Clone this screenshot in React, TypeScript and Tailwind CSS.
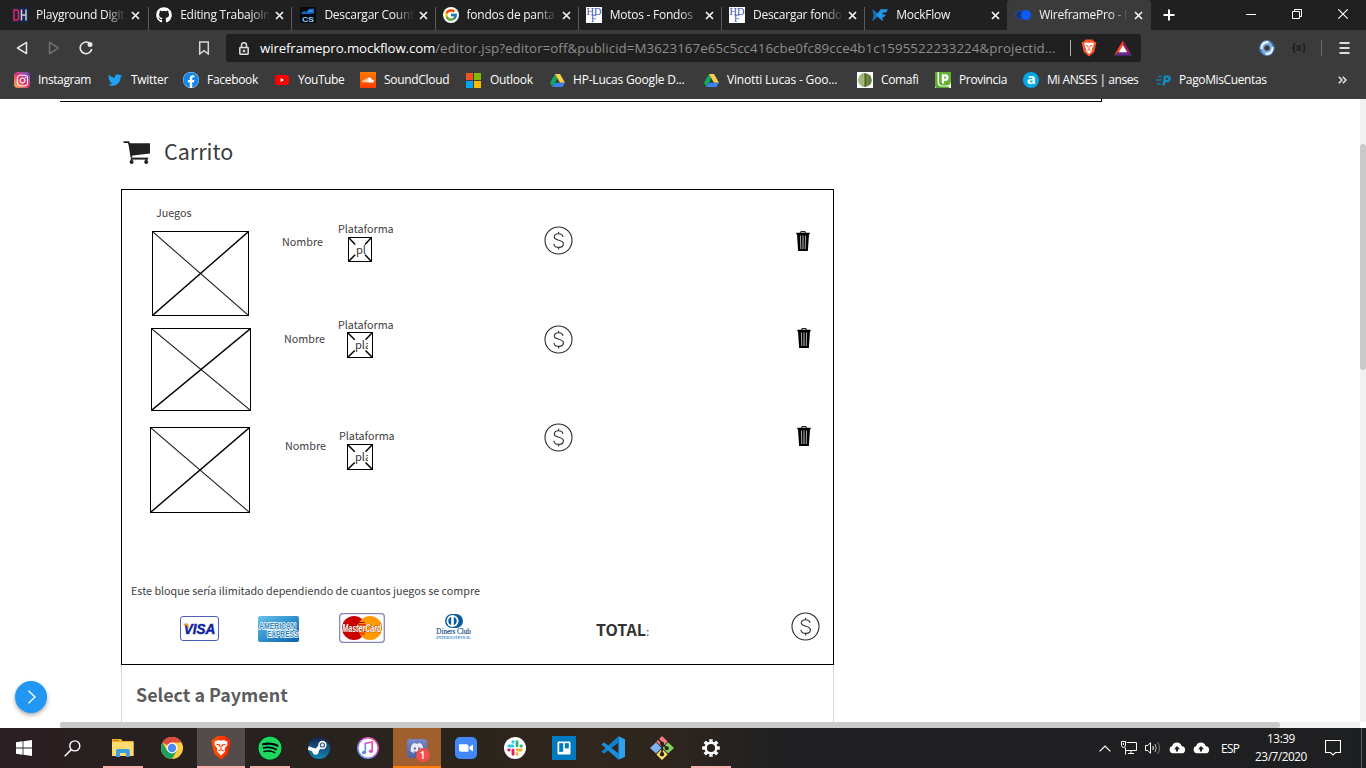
import React from "react";
import { FaGithub, FaTwitter, FaFacebook, FaSoundcloud, FaSpotify, FaInstagram, FaDiscord } from "react-icons/fa";
import { FcGoogle } from "react-icons/fc";

const UI = "font-['Open_Sans','Noto_Sans',sans-serif]";
const PAGE = "font-['Noto_Sans_CJK_SC','Noto_Sans',sans-serif]";

/* ---------- favicons ---------- */

const PlaygroundIcon = () => (
  <svg width="16" height="16" viewBox="0 0 16 16">
    <rect y="0.5" width="16" height="15" fill="#1b2450" />
    <path d="M2 3 V13 H4.5 Q6.5 13 6.5 11 V5 Q6.5 3 4.5 3 Z" fill="none" stroke="#f0243f" strokeWidth="1.5" />
    <path d="M9.5 2.5 V13.5 M14 2.5 V13.5 M9.5 8 H14" stroke="#c9cde0" strokeWidth="1.5" />
  </svg>
);
const CsIcon = () => (
  <svg width="16" height="16" viewBox="0 0 16 16">
    <rect width="16" height="16" rx="1" fill="#05080e" />
    <path d="M1 6 L4 4 L6 5 L9 2 L14 1.5 V6.5 L9 7 H2 Z" fill="#1268c8" />
    <path d="M8 4 H13" stroke="#56aef5" />
    <text x="2" y="15" fontFamily="Liberation Sans" fontSize="8" fontWeight="bold" textLength="12" lengthAdjust="spacingAndGlyphs" fill="#8fd0fa">
      CS
    </text>
  </svg>
);
const GoogleIcon = () => (
  <span className="flex h-4 w-4 items-center justify-center rounded-full bg-white">
    <FcGoogle size={14} />
  </span>
);
const HdfIcon = () => (
  <svg width="16" height="16" viewBox="0 0 16 16">
    <rect width="16" height="16" fill="#fff" />
    <g fontFamily="Liberation Serif" fill="#4253b4">
      <text x="0.5" y="7.5" fontSize="10" textLength="15" lengthAdjust="spacingAndGlyphs">
        HD
      </text>
      <text x="5" y="15" fontSize="10">
        F
      </text>
    </g>
  </svg>
);
const MockflowIcon = () => (
  <svg width="16" height="14" viewBox="0 0 16 14">
    <path d="M0.2 1 L6 5.4 V8.6 L0.2 13.2 L1.6 7.2 Z" fill="#1670b8" />
    <path d="M4.5 7 L8.6 1.2 H16 L14.2 4.4 H10.6 V6.4 H13.8 L12.4 9 H10.6 V13.2 L6 9 Z" fill="#2196ea" />
  </svg>
);
const WireIcon = () => (
  <svg width="16" height="12" viewBox="0 0 16 12">
    <circle cx="5" cy="6" r="4.3" fill="#1f3468" stroke="#1c50c8" />
    <circle cx="11" cy="6" r="5" fill="#0b5cff" />
  </svg>
);

const tabs: { title: string; icon: React.ReactNode; cell: string; divider?: boolean }[] = [
  { title: "Playground Digit", icon: <PlaygroundIcon />, cell: "w-[144.2px] pl-[7px]", divider: true },
  { title: "Editing TrabajoIn", icon: <FaGithub size={16} className="text-white" />, cell: "w-[143.2px] pl-[7px]", divider: true },
  { title: "Descargar Count", icon: <CsIcon />, cell: "w-[143.2px] pl-[8px]", divider: true },
  { title: "fondos de panta", icon: <GoogleIcon />, cell: "w-[143.2px] pl-[7px]", divider: true },
  { title: "Motos - Fondos", icon: <HdfIcon />, cell: "w-[143.2px] pl-[7px]", divider: true },
  { title: "Descargar fondo", icon: <HdfIcon />, cell: "w-[143.2px] pl-[7px]", divider: true },
  { title: "MockFlow", icon: <MockflowIcon />, cell: "w-[142px] pl-[7px]" },
  { title: "WireframePro - I", icon: <WireIcon />, cell: "w-[144px] rounded-t-[3px] bg-[#3b3b3b] pl-2" },
];

const Close = () => (
  <svg width="9" height="9" viewBox="0 0 9 9" className="shrink-0">
    <path d="M1 1 L8 8 M8 1 L1 8" stroke="#f2f2f2" strokeWidth="1.7" />
  </svg>
);

function TabStrip() {
  return (
    <div className="flex h-[30px] bg-[#202020] pl-[5px]">
      {tabs.map((t, i) => (
        <div key={i} className={`${t.cell} flex h-[30px] shrink-0 items-center text-[#f4f4f4]`}>
          <span className="flex w-4 shrink-0 justify-center">{t.icon}</span>
          <span className="ml-2 w-[92px] shrink-0 whitespace-nowrap text-[12px] leading-4 tracking-[-0.25px] [mask-image:linear-gradient(90deg,#000_76%,transparent_98%)]">
            {t.title}
          </span>
          <span className="ml-[3px]">
            <Close />
          </span>
          {t.divider && <span className="ml-auto mt-[7px] h-[23px] w-px shrink-0 bg-[#5c5c5c]" />}
        </div>
      ))}
      <div className="flex flex-1 items-center">
        <svg width="12" height="12" viewBox="0 0 12 12" className="ml-[12px]">
          <path d="M6 0.5 V11.5 M0.5 6 H11.5" stroke="#fff" strokeWidth="2" />
        </svg>
        <svg width="10" height="10" viewBox="0 0 10 10" className="ml-[71px]">
          <path d="M0 4.5 H10" stroke="#fff" />
        </svg>
        <svg width="10" height="10" viewBox="0 0 10 10" className="mb-[2px] ml-[36px]">
          <path d="M2.5 2.5 V0.5 H9.5 V7.5 H7.5 M0.5 2.5 H7.5 V9.5 H0.5 Z" fill="none" stroke="#fff" />
        </svg>
        <svg width="10" height="10" viewBox="0 0 10 10" className="mb-[2px] ml-[36px]">
          <path d="M0.3 0.3 L9.7 9.7 M9.7 0.3 L0.3 9.7" stroke="#fff" strokeWidth="1.1" />
        </svg>
      </div>
    </div>
  );
}

function Toolbar() {
  return (
    <div className="flex h-9 items-center">
      <svg width="12" height="14" viewBox="0 0 12 14" className="ml-4">
        <path d="M10.5 1.4 V12.6 L1.5 7 Z" fill="none" stroke="#e4e4e4" strokeWidth="1.5" strokeLinejoin="round" />
      </svg>
      <svg width="12" height="14" viewBox="0 0 12 14" className="ml-5">
        <path d="M1.5 1.4 V12.6 L10.5 7 Z" fill="none" stroke="#757575" strokeWidth="1.4" strokeLinejoin="round" />
      </svg>
      <svg width="14" height="14" viewBox="0 0 14 14" className="ml-[19px]">
        <path d="M10.5 2.2 A5.8 5.8 0 1 0 12.7 8" fill="none" stroke="#e8e8e8" strokeWidth="1.6" />
        <circle cx="11" cy="3.5" r="2.5" fill="#e8e8e8" />
      </svg>
      <svg width="12" height="14" viewBox="0 0 12 14" className="ml-[105px]">
        <path d="M1.7 1 H10.3 V13 L6 9.7 L1.7 13 Z" fill="none" stroke="#d8d8d8" strokeWidth="1.5" />
      </svg>
      <div className="ml-4 flex h-7 w-[915px] items-center rounded-[3px] bg-[#202020]">
        <svg width="10" height="13" viewBox="0 0 10 13" className="ml-[13px]">
          <path d="M2.5 5.5 V3.3 A2.5 2.5 0 0 1 7.5 3.3 V5.5" fill="none" stroke="#dedede" strokeWidth="1.5" />
          <rect x="0.8" y="5.6" width="8.4" height="6.6" rx="0.6" fill="#333" stroke="#dedede" strokeWidth="1.5" />
          <circle cx="5" cy="8.9" r="1.2" fill="#dedede" />
        </svg>
        <div className="ml-[11px] w-[797px] whitespace-nowrap text-[13.3px] leading-5 tracking-[-0.14px] text-[#8d8d8d]">
          <span className="text-white">wireframepro.mockflow.com</span>
          <span className="tracking-[0.07px]">/editor.jsp?editor=off&amp;publicid=M3623167e65c5cc416cbe0fc89cce4b1c1595522233224&amp;projectid...</span>
        </div>
        <span className="ml-[13px] h-4 w-px bg-[#b0b0b0]" />
        <svg width="16" height="18" viewBox="0 0 16 18" className="ml-[10px]">
          <path d="M4.5 0.5 H11.5 L13 2.2 L15.5 3.5 L14.8 6 L13.3 13 L8 17.5 L2.7 13 L1.2 6 L0.5 3.5 L3 2.2 Z" fill="#fb542b" />
          <path d="M3 4 L6 3.5 L8 4 L10 3.5 L13 4 L12 7.5 L10.8 10 L11 12 L8 15 L5 12 L5.2 10 L4 7.5 Z" fill="#fff" />
          <path d="M4.8 6.5 L7 7 L6.8 8 M11.2 6.5 L9 7 L9.2 8 M6.2 11.5 L8 10.5 L9.8 11.5 M8 8 V10" stroke="#fb542b" fill="none" strokeWidth="1" />
        </svg>
        <svg width="18" height="16" viewBox="0 0 18 16" className="ml-[17px]">
          <path d="M9 0.5 L0 15.5 L9 9 Z" fill="#ff4724" />
          <path d="M9 0.5 L18 15.5 L9 9 Z" fill="#9e1f63" />
          <path d="M0 15.5 H18 L9 9 Z" fill="#662d91" />
          <path d="M9 5.2 L4.8 12.2 H13.2 Z" fill="#fff" />
        </svg>
      </div>
      <svg width="16" height="16" viewBox="0 0 16 16" className="ml-[118px]">
        <circle cx="8" cy="8" r="5.2" fill="none" stroke="#7faade" strokeWidth="5" />
        <path d="M8 0.4 A7.6 7.6 0 0 1 15.6 8 A7.6 7.6 0 0 1 12 14.4 A8.5 8.5 0 0 0 8 0.4 Z" fill="#1f58a6" />
        <path d="M8 15.6 A7.6 7.6 0 0 1 0.4 8 A7.6 7.6 0 0 1 4 1.6 A8.5 8.5 0 0 0 8 15.6 Z" fill="#2f6bb8" />
        <path d="M2.6 9 A5.6 5.6 0 0 1 9.4 2.4 M13.4 7 A5.6 5.6 0 0 1 6.6 13.6" fill="none" stroke="#f2f8ff" strokeWidth="2" />
      </svg>
      <svg width="14" height="10" viewBox="0 0 14 10" className="ml-[17px]">
        <path d="M3 0.8 H2 V4 L0.8 5 L2 6 V9.2 H3 M11 0.8 H12 V4 L13.2 5 L12 6 V9.2 H11 M4.5 3 H9.5 M4.5 5 H9.5 M4.5 7 H9.5" fill="none" stroke="#161616" strokeWidth="1.2" />
      </svg>
      <span className="ml-[15px] h-4 w-px bg-[#6a6a6a]" />
      <svg width="11" height="12" viewBox="0 0 11 12" className="ml-[17px]">
        <path d="M0.5 1 H10.5 M0.5 6 H10.5 M0.5 11 H10.5" stroke="#dedede" strokeWidth="1.8" />
      </svg>
    </div>
  );
}

const Drive = () => (
  <svg width="15" height="13" viewBox="0 0 15 13">
    <path d="M5 0 L0 8.7 L2.5 13 L7.5 4.3 Z" fill="#11a861" />
    <path d="M5 0 H10 L15 8.7 H10 Z" fill="#ffcf48" />
    <path d="M5 8.7 H15 L12.5 13 H2.5 Z" fill="#3c7ff0" />
  </svg>
);

const bookmarks: { label: string; width: string; icon: React.ReactNode }[] = [
  {
    label: "Instagram",
    width: "w-[93px] tracking-[-0.4px]",
    icon: (
      <span className="flex h-4 w-4 items-center justify-center rounded-[4px] bg-gradient-to-tr from-[#fdb040] via-[#e0306c] to-[#6a45d8]">
        <FaInstagram size={13} className="text-white" />
      </span>
    ),
  },
  { label: "Twitter", width: "w-[76px] tracking-[-0.3px]", icon: <FaTwitter size={14} className="text-[#1da1f2]" /> },
  {
    label: "Facebook",
    width: "w-[91px] tracking-[-0.3px]",
    icon: (
      <span className="flex h-4 w-4 rounded-full bg-white">
        <FaFacebook size={16} className="text-[#1187ee]" />
      </span>
    ),
  },
  {
    label: "YouTube",
    width: "w-[86px] tracking-[-0.45px]",
    icon: (
      <svg width="14" height="10" viewBox="0 0 14 10">
        <rect width="14" height="10" rx="2.2" fill="#f00" />
        <path d="M5.6 3 L9.2 5 L5.6 7 Z" fill="#fff" />
      </svg>
    ),
  },
  {
    label: "SoundCloud",
    width: "w-[106px] tracking-[-0.3px]",
    icon: (
      <span className="flex h-4 w-4 items-center justify-center bg-gradient-to-b from-[#ff7a00] to-[#ff3a00]">
        <FaSoundcloud size={12} className="text-white" />
      </span>
    ),
  },
  {
    label: "Outlook",
    width: "w-[83px] tracking-[-0.3px]",
    icon: (
      <span className="mr-px grid h-[15px] w-[15px] grid-cols-2 gap-px">
        <span className="bg-[#f25022]" />
        <span className="bg-[#7fba00]" />
        <span className="bg-[#00a4ef]" />
        <span className="bg-[#ffb900]" />
      </span>
    ),
  },
  { label: "HP-Lucas Google D...", width: "w-[154px] tracking-[-0.2px]", icon: <Drive /> },
  { label: "Vinotti Lucas - Goo...", width: "w-[154px] tracking-[-0.17px]", icon: <Drive /> },
  {
    label: "Comafi",
    width: "w-[78px] tracking-[-0.35px]",
    icon: (
      <svg width="16" height="16" viewBox="0 0 16 16">
        <rect width="16" height="16" fill="#fff" />
        <circle cx="8" cy="8" r="6.8" fill="#5f7a34" />
        <path d="M8 1.2 A6.8 6.8 0 0 0 8 14.8 Z" fill="#a9bd83" />
        <path d="M5.6 2 Q4.2 8 5.6 14 M10.4 2 Q11.8 8 10.4 14" stroke="#86a058" strokeWidth="0.7" fill="none" />
        <path d="M8 1.2 V14.8" stroke="#3f551b" strokeWidth="1" />
      </svg>
    ),
  },
  {
    label: "Provincia",
    width: "w-[88px] tracking-[-0.35px]",
    icon: (
      <svg width="16" height="16" viewBox="0 0 16 16">
        <rect width="16" height="16" fill="#fff" />
        <path d="M0 0 H2.5 V10 Q2.5 14.5 7 14.5 H14 V16 H2 Q0 16 0 14 Z" fill="#5aa832" />
        <path d="M4 0 H16 V9 Q16 13.5 11 13.5 H7 Q4 13.5 4 10 Z" fill="#63b331" />
        <path d="M8 11.5 V3.4 H10 Q12.5 3.4 12.5 5.6 Q12.5 7.8 10 7.8 H8" fill="none" stroke="#fff" strokeWidth="2.3" />
      </svg>
    ),
  },
  {
    label: "Mi ANSES | anses",
    width: "w-[132px] tracking-[-0.45px]",
    icon: (
      <span className="flex h-4 w-4 items-center justify-center rounded-full bg-[#00a9e6] pb-[3px] font-['Open_Sans',sans-serif] text-[15px] font-bold leading-none text-white">
        a
      </span>
    ),
  },
  {
    label: "PagoMisCuentas",
    width: "w-[120px] tracking-[-0.37px]",
    icon: (
      <svg width="15" height="11" viewBox="0 0 15 11">
        <path d="M2 1.5 H6 M0 5 H5.5 M1 9 H5" stroke="#0b7fae" strokeWidth="1.4" />
        <path d="M7.5 10.5 L9 1.6 H12 Q14 1.6 13.5 4 Q13 6.2 11 6.2 H8.5" fill="none" stroke="#0d8fc6" strokeWidth="2.3" />
      </svg>
    ),
  },
];

function Bookmarks() {
  return (
    <div className="flex h-[33px] items-center pb-[5px] pl-[14px]">
      {bookmarks.map((b) => (
        <div key={b.label} className={`${b.width} flex shrink-0 items-center text-[12px] text-white`}>
          <span className="flex w-4 shrink-0 justify-center">{b.icon}</span>
          <span className="ml-2 whitespace-nowrap leading-4">{b.label}</span>
        </div>
      ))}
      <svg width="9" height="8" viewBox="0 0 9 8" className="ml-[63px]">
        <path d="M0.8 0.8 L4 4 L0.8 7.2 M4.8 0.8 L8 4 L4.8 7.2" fill="none" stroke="#e6e6e6" strokeWidth="1.5" />
      </svg>
    </div>
  );
}

/* ---------- wireframe page ---------- */

const CrossBox = ({ className }: { className: string }) => (
  <div className={`${className} border border-black`}>
    <svg width="100%" height="100%" viewBox="0 0 100 100" preserveAspectRatio="none" className="block">
      <path d="M0 0 L100 100" stroke="#222" strokeWidth="1.1" vectorEffect="non-scaling-stroke" />
      <path d="M100 0 L0 100" stroke="#000" strokeWidth="1.4" vectorEffect="non-scaling-stroke" />
    </svg>
  </div>
);

const PlatformBox = ({ className, label, size }: { className: string; label: string; size: string }) => (
  <div className={`${className} relative border border-black`}>
    <svg width="100%" height="100%" viewBox="0 0 100 100" preserveAspectRatio="none" className="block">
      <path d="M0 0 L28 28 M73 73 L100 100 M100 0 L73 28 M28 73 L0 100" stroke="#000" strokeWidth="1.5" vectorEffect="non-scaling-stroke" />
    </svg>
    <span className={`${size} absolute left-[7px] top-[3px] overflow-hidden text-[11px] leading-4 text-[#333]`}>{label}</span>
  </div>
);

const Dollar = ({ className }: { className: string }) => (
  <svg width="29" height="29" viewBox="0 0 29 29" className={`${className} shrink-0`}>
    <circle cx="14.5" cy="14.5" r="13.5" fill="none" stroke="#2b2b2b" strokeWidth="1.1" />
    <path
      d="M19 10.8 C18.7 8.8 17 7.7 14.6 7.7 C12.1 7.7 10.3 9 10.3 11 C10.3 15.2 19.4 13.2 19.4 17.8 C19.4 20 17.4 21.4 14.8 21.4 C12 21.4 10.1 20 9.9 17.7 M14.6 5.7 V7.7 M14.6 21.4 V23.4"
      fill="none"
      stroke="#333"
      strokeWidth="1.15"
    />
  </svg>
);

const Trash = ({ className }: { className: string }) => (
  <svg width="14" height="20" viewBox="0 0 14 20" className={className}>
    <path d="M4.8 2 V0.6 H9.2 V2" fill="none" stroke="#111" strokeWidth="1" />
    <path d="M0.3 1.8 H13.7 V3.2 H0.3 Z M1 3 H13 L11.9 20 H2.1 Z" fill="#000" />
    <path d="M4.4 4.5 L4.8 18 M9.6 4.5 L9.2 18" stroke="#d5d5d5" strokeWidth="0.8" />
    <path d="M7 4.5 V18" stroke="#8a8a8a" strokeWidth="1.4" />
  </svg>
);

const rows = [
  {
    row: "h-24",
    image: "ml-[30px] mt-[10px] h-[85px] w-[97px]",
    name: "ml-[2px] mt-[13px]",
    platform: "ml-[2px]",
    box: "ml-[10px] h-[25px] w-[24px]",
    label: "pl",
    labelSize: "w-[11px]",
    price: "ml-[2px] mt-[5px]",
    trash: "ml-[2px] mt-[10px]",
  },
  {
    row: "h-[102px]",
    image: "ml-[29px] mt-[11px] h-[83px] w-[100px]",
    name: "ml-[4px] mt-[14px]",
    platform: "ml-[2px]",
    box: "ml-[9px] -mt-px h-[26px] w-[26px]",
    label: "pla",
    labelSize: "w-[13px]",
    price: "ml-[2px] mt-[8px]",
    trash: "ml-[3px] mt-[11px]",
  },
  {
    row: "h-[164px]",
    image: "ml-[28px] mt-[8px] h-[86px] w-[100px]",
    name: "ml-[5px] mt-[19px]",
    platform: "ml-[3px] mt-[9px]",
    box: "ml-[8px] h-[26px] w-[26px]",
    label: "pla",
    labelSize: "w-[13px]",
    price: "ml-[2px] mt-[4px]",
    trash: "ml-[2.5px] mt-[7px]",
  },
];

const Visa = () => (
  <div className="ml-[58px] mt-[17px] flex h-[25px] w-[39px] items-center justify-center rounded-[3px] border border-[#4a5fc0] bg-white">
    <svg width="33" height="12" viewBox="0 0 33 12" className="overflow-visible">
      <text x="0.8" y="11.4" fontFamily="Liberation Sans" fontWeight="bold" fontStyle="italic" fontSize="15.5" textLength="31.5" lengthAdjust="spacingAndGlyphs" fill="#10249a" stroke="#10249a" strokeWidth="0.5">
        VISA
      </text>
      <path d="M0.2 0.8 H5 L6.6 6 Q4.4 2.2 0.2 1.4 Z" fill="#f29a1c" />
    </svg>
  </div>
);

const Amex = () => (
  <svg width="41" height="26" viewBox="0 0 41 26" className="ml-[39px] mt-[17px]">
    <defs>
      <linearGradient id="amex" x1="0" y1="0" x2="1" y2="1">
        <stop offset="0" stopColor="#6cc0ea" />
        <stop offset="0.5" stopColor="#3090cd" />
        <stop offset="1" stopColor="#0c62aa" />
      </linearGradient>
    </defs>
    <rect width="41" height="26" rx="2" fill="url(#amex)" />
    <g fontFamily="Liberation Sans" fontWeight="bold" fontSize="8.6" fill="#2f83bf" stroke="#fff" strokeWidth="1.5" paintOrder="stroke">
      <text x="1" y="12.8" textLength="37" lengthAdjust="spacingAndGlyphs">AMERICAN</text>
      <text x="9" y="21.3" textLength="31.5" lengthAdjust="spacingAndGlyphs">EXPRESS</text>
    </g>
  </svg>
);

const Mastercard = () => (
  <svg width="46" height="30" viewBox="0 0 46 30" className="ml-[40px] mt-[14px]">
    <rect x="0.7" y="0.7" width="44.6" height="28.6" rx="3" fill="#fff" stroke="#8286b8" strokeWidth="1.3" />
    <circle cx="15" cy="15" r="12" fill="#cc0000" />
    <circle cx="31" cy="15" r="12" fill="#ff9a00" />
    <path d="M20 9.5 H26 M19.5 11.7 H26.5 M19.5 18.7 H26.5 M20 21 H26" stroke="#cc0000" strokeWidth="1.1" />
    <text x="3.3" y="19" fontFamily="Liberation Sans" fontWeight="bold" fontStyle="italic" fontSize="10.5" textLength="39" lengthAdjust="spacingAndGlyphs" fill="#fff" stroke="#8a1408" strokeWidth="0.7" paintOrder="stroke">
      MasterCard
    </text>
  </svg>
);

const Diners = () => (
  <svg width="38" height="27" viewBox="0 0 38 27" className="ml-[50px] mt-[15px]">
    <path d="M10 7 A7 7 0 0 1 17 0 H21 A7 7 0 0 1 21 14 H17 A7 7 0 0 1 10 7 Z" fill="#0a5c9c" />
    <circle cx="17.5" cy="7" r="6" fill="#fff" />
    <path d="M16.2 3 A4.2 4.2 0 0 0 16.2 11 Z M18.8 3 A4.2 4.2 0 0 1 18.8 11 Z" fill="#0a5c9c" />
    <text x="1.3" y="20.3" fontFamily="Liberation Serif" fontSize="8.6" textLength="34.5" lengthAdjust="spacingAndGlyphs" fill="#174f86" stroke="#174f86" strokeWidth="0.2">
      Diners Club
    </text>
    <text x="1.3" y="25" fontFamily="Liberation Serif" fontWeight="bold" fontSize="4.6" textLength="34.5" lengthAdjust="spacingAndGlyphs" fill="#2f85cc">
      INTERNATIONAL
    </text>
  </svg>
);

function CartPage() {
  return (
    <div className={`${PAGE} flex min-h-0 flex-1 bg-white`}>
      <div className="flex w-[60px] shrink-0 flex-col justify-end pb-[15px] pl-[15px]">
        <div className="flex h-8 w-8 items-center justify-center rounded-full bg-[#2196f3] shadow-[0_2px_4px_rgba(0,0,0,0.35)]">
          <svg width="10" height="14" viewBox="0 0 10 14" className="ml-[2px]">
            <path d="M1.5 0.8 L8 7 L1.5 13.2" fill="none" stroke="#fff" strokeWidth="1.4" />
          </svg>
        </div>
      </div>
      <div className="flex w-[1300px] shrink-0 flex-col">
        <div className="h-[3px] w-[1042px] shrink-0 border-b border-r border-black" />
        <div className="flex h-[87px] shrink-0 pl-[63px] pt-[38px]">
          <svg width="28" height="24" viewBox="0 0 28 24" className="mt-px">
            <path d="M0.5 1.2 H5.5 L6.5 4 L8.5 16.5" fill="none" stroke="#222" strokeWidth="1.8" />
            <path d="M6 2.3 H27 V12.6 L8 14.8 Z" fill="#222" />
            <path d="M8 17.6 H25.2" stroke="#222" strokeWidth="2" />
            <circle cx="8.6" cy="20.9" r="2" fill="#222" />
            <circle cx="23.2" cy="20.9" r="2" fill="#222" />
            <path d="M8.5 17.6 V21 M23.2 17.6 V21" stroke="#222" strokeWidth="1.6" />
          </svg>
          <h1 className="ml-[13px] -mt-[5px] text-[21.5px] leading-8 text-[#3c3c3c]">Carrito</h1>
        </div>
        <section className="ml-[61px] flex h-[476px] w-[713px] shrink-0 flex-col border border-black pt-[15px] text-[10.75px] leading-4 text-[#404040]">
          <h2 className="h-4 pl-[34px]">Juegos</h2>
          {rows.map((r, i) => (
            <div key={i} className={`${r.row} grid shrink-0 grid-cols-[158px_56px_206px_252px_1fr] items-start`}>
              <CrossBox className={r.image} />
              <span className={r.name}>Nombre</span>
              <div className={r.platform}>
                <div>Plataforma</div>
                <PlatformBox className={r.box} label={r.label} size={r.labelSize} />
              </div>
              <Dollar className={r.price} />
              <Trash className={r.trash} />
            </div>
          ))}
          <p className="h-4 pl-[9px]">Este bloque sería ilimitado dependiendo de cuantos juegos se compre</p>
          <div className="flex h-[65px] items-start">
            <Visa />
            <Amex />
            <Mastercard />
            <Diners />
            <div className="ml-[123px] mt-[20px] w-[195px] leading-5">
              <b className="text-[16px] text-[#333]">TOTAL</b>:
            </div>
            <Dollar className="mt-[13px]" />
          </div>
        </section>
        <section className="ml-[61px] h-[57px] w-[713px] shrink-0 border-x border-[#d9d9d9] pl-[14px] pt-[17px]">
          <h2 className="text-[17.9px] font-bold leading-6 text-[#5c5c5c]">Select a Payment</h2>
        </section>
        <div className="h-[6px] shrink-0 bg-[#f1f1f1]">
          <div className="h-[6px] w-[1220px] rounded-[3px] bg-[#c9c9c9]" />
        </div>
      </div>
      <div className="mb-[6px] w-[6px] shrink-0 bg-[#f1f1f1] pt-[45px]">
        <div className="h-[226px] rounded-[3px] bg-[#c9c9c9]" />
      </div>
    </div>
  );
}

/* ---------- taskbar ---------- */

const apps: { key: string; icon: React.ReactNode; cell?: string; line?: string }[] = [
  {
    key: "explorer",
    line: "w-10 bg-[#fab0ab]",
    icon: (
      <svg width="22" height="18" viewBox="0 0 22 18">
        <path d="M0 0 H9 L10.5 2 H21.5 V17 H0 Z" fill="#f0b429" />
        <rect y="3" width="21.5" height="14" fill="#ffdb70" />
        <path d="M1 1.4 H7" stroke="#b87c10" />
        <path d="M4 18 V11.5 Q4 10 5.5 10 H16 Q17.8 10 17.8 11.5 V18 H14 V14 H8 V18 Z" fill="#3d9fe0" />
      </svg>
    ),
  },
  {
    key: "chrome",
    icon: (
      <svg width="22" height="22" viewBox="0 0 22 22">
        <circle cx="11" cy="11" r="11" fill="#ffcd42" />
        <path d="M11 11 L1.5 5.5 A11 11 0 0 1 20.5 5.5 H11 Z" fill="#e04a3c" />
        <path d="M1.5 5.5 A11 11 0 0 0 11 22 L15.8 13.8 L6.2 13.8 Z" fill="#1ba15f" />
        <circle cx="11" cy="11" r="5.4" fill="#fff" />
        <circle cx="11" cy="11" r="4.2" fill="#4c8bf5" />
      </svg>
    ),
  },
  {
    key: "brave",
    cell: "bg-[#534c4a]",
    line: "w-12 bg-[#fab0ab]",
    icon: (
      <svg width="20" height="24" viewBox="0 0 20 24">
        <defs>
          <linearGradient id="brv">
            <stop offset="0" stopColor="#ff5500" />
            <stop offset="1" stopColor="#ff2000" />
          </linearGradient>
        </defs>
        <path d="M6 0 H14 L16 2.3 L19.5 4.2 L19 8 L16.5 18 L10 23.5 L3.5 18 L1 8 L0.5 4.2 L4 2.3 Z" fill="url(#brv)" />
        <path d="M3.5 5.5 L7.5 4 L10 4.7 L12.5 4 L16.5 5.5 L16.3 9 L13.6 12.6 L14 15.6 L10 19.5 L6 15.6 L6.4 12.6 L3.7 9 Z" fill="#fff" />
        <path d="M5.3 8.3 L8.7 9 L8.2 10.6 M14.7 8.3 L11.3 9 L11.8 10.6 M7.4 15 L10 13.6 L12.6 15 M10 9.5 V13" stroke="#ff3a0a" fill="none" strokeWidth="1.1" />
      </svg>
    ),
  },
  {
    key: "spotify",
    line: "w-10 bg-[#fab0ab]",
    icon: (
      <span className="rounded-full bg-black">
        <FaSpotify size={24} className="text-[#1ed760]" />
      </span>
    ),
  },
  {
    key: "steam",
    icon: (
      <svg width="22" height="22" viewBox="0 0 22 22">
        <defs>
          <linearGradient id="stm" x1="0" y1="0" x2="0" y2="1">
            <stop offset="0" stopColor="#16234c" />
            <stop offset="1" stopColor="#1387b8" />
          </linearGradient>
        </defs>
        <circle cx="11" cy="11" r="11" fill="url(#stm)" />
        <path d="M0.3 11 L8 14 L13 8.5" fill="none" stroke="#fff" strokeWidth="3.6" />
        <circle cx="7.6" cy="14.6" r="3.1" fill="#fff" />
        <circle cx="14.4" cy="8" r="3.4" fill="#1c3c6c" stroke="#fff" strokeWidth="1.6" />
        <circle cx="14.4" cy="8" r="1.8" fill="#cfe0ee" />
      </svg>
    ),
  },
  {
    key: "itunes",
    icon: (
      <svg width="22" height="22" viewBox="0 0 22 22">
        <defs>
          <linearGradient id="itn" x1="1" y1="0" x2="0" y2="1">
            <stop offset="0" stopColor="#f64f83" />
            <stop offset="0.5" stopColor="#b560e8" />
            <stop offset="1" stopColor="#35b4f5" />
          </linearGradient>
        </defs>
        <circle cx="11" cy="11" r="10.2" fill="#fff" stroke="url(#itn)" strokeWidth="1.6" />
        <path d="M8.3 15.5 V6.5 L15.2 5 V14" fill="none" stroke="url(#itn)" strokeWidth="1.7" />
        <ellipse cx="7" cy="15.6" rx="2.1" ry="1.8" fill="#6f7ff0" />
        <ellipse cx="13.9" cy="14.2" rx="2.1" ry="1.8" fill="#d257c0" />
      </svg>
    ),
  },
  {
    key: "discord",
    cell: "bg-[#a0602d]",
    line: "w-12 bg-[#ff7a00]",
    icon: (
      <span className="relative flex h-[19px] w-[20px] items-center justify-center rounded-[3px] bg-gradient-to-b from-[#7688cc] to-[#525f9c]">
        <FaDiscord size={14} className="text-[#e8eaf4]" />
        <span className="absolute left-[9px] top-[9px] flex h-[14px] w-[14px] items-center justify-center rounded-full bg-[#f04f50] text-[10px] font-semibold leading-none text-white">
          1
        </span>
      </span>
    ),
  },
  {
    key: "zoom",
    icon: (
      <svg width="22" height="22" viewBox="0 0 22 22">
        <rect width="22" height="22" rx="5" fill="#4188fb" />
        <path d="M4 7.3 H11.5 Q13.5 7.3 13.5 9.3 V14.7 H6 Q4 14.7 4 12.7 Z M14.4 9.8 L18 7.4 V14.6 L14.4 12.2 Z" fill="#fff" />
      </svg>
    ),
  },
  {
    key: "slack",
    icon: (
      <svg width="22" height="22" viewBox="0 0 22 22">
        <circle cx="11" cy="11" r="11" fill="#fff" />
        <g strokeWidth="2.9" strokeLinecap="round" fill="none">
          <path d="M4.8 9 H8.8 M9 4.6 V5.2" stroke="#36c5f0" />
          <path d="M13 4.8 V8.8 M16.9 9 H17.4" stroke="#2eb67d" />
          <path d="M13.2 13 H17.2 M13 16.8 V17.3" stroke="#ecb22e" />
          <path d="M9 13.2 V17.2 M4.7 13 H5.2" stroke="#e01e5a" />
        </g>
      </svg>
    ),
  },
  {
    key: "trello",
    icon: (
      <svg width="24" height="24" viewBox="0 0 24 24">
        <rect width="24" height="24" fill="#0079bf" />
        <rect x="5.5" y="5.5" width="13" height="13" rx="1.2" fill="#fff" />
        <rect x="7.2" y="7.2" width="4" height="8.6" fill="#0079bf" />
        <rect x="12.8" y="7.2" width="4" height="5.2" fill="#0079bf" />
      </svg>
    ),
  },
  {
    key: "vscode",
    icon: (
      <svg width="24" height="24" viewBox="0 0 24 24">
        <path d="M17.5 0.3 L24 3.2 V20.8 L17.5 23.7 Z" fill="#2ba3ee" />
        <path d="M17.5 0.3 L0.4 15.6 L2.8 17.8 L17.5 6.7 Z" fill="#0f7fcb" />
        <path d="M17.5 23.7 L0.4 8.4 L2.8 6.2 L17.5 17.3 Z" fill="#1a8ddb" />
      </svg>
    ),
  },
  {
    key: "git",
    icon: (
      <svg width="24" height="24" viewBox="0 0 24 24">
        <path d="M12 0 L17.6 5.6 L12 11.2 L6.4 5.6 Z" fill="#f27e7e" />
        <path d="M6 6.3 L11.6 12 L6 17.6 L0 12 Z" fill="#7fb2f5" />
        <path d="M18 6.3 L24 12 L18 17.6 L12.4 12 Z" fill="#84d35c" />
        <path d="M12 12.8 L17.6 18.4 L12 24 L6.4 18.4 Z" fill="#ffe66b" />
        <path d="M12 6 V19 M8 2.5 L12 7.5 L16.5 12" stroke="#2b2320" strokeWidth="1.7" fill="none" />
        <circle cx="12" cy="7.5" r="2" fill="#2b2320" />
        <circle cx="16.8" cy="12.2" r="2" fill="#2b2320" />
        <circle cx="12" cy="18.3" r="2.2" fill="#2b2320" />
      </svg>
    ),
  },
  {
    key: "settings",
    line: "w-10 bg-[#fab0ab]",
    icon: (
      <svg width="18" height="18" viewBox="-9 -9 18 18">
        <circle r="5.3" fill="none" stroke="#fff" strokeWidth="2.4" />
        {[0, 45, 90, 135, 180, 225, 270, 315].map((a) => (
          <rect key={a} x="-1.7" y="-8.8" width="3.4" height="3" fill="#fff" transform={`rotate(${a})`} />
        ))}
      </svg>
    ),
  },
];

const Cloud = () => (
  <svg width="16" height="12" viewBox="0 0 16 12">
    <path d="M4 11.3 A3.8 3.8 0 0 1 3.2 3.9 A4.9 4.9 0 0 1 12.6 4.1 A3.6 3.6 0 0 1 12.4 11.3 Z" fill="#fff" />
    <path d="M8 4 L11 7.2 H9 V9.5 H7 V7.2 H5 Z" fill="#202022" />
  </svg>
);

function Taskbar() {
  return (
    <div className="flex h-10 shrink-0 items-center bg-[linear-gradient(90deg,#2a1f22_0,#27211f_250px,#29241d_400px,#30261d_600px,#2c241e_690px,#202022_780px,#1e1f21_100%)]">
      <div className="flex w-12 justify-center">
        <svg width="16" height="16" viewBox="0 0 16 16">
          <path d="M0 2.2 L6.6 1.3 V7.5 H0 Z M7.4 1.2 L16 0 V7.5 H7.4 Z M0 8.4 H6.6 V14.7 L0 13.8 Z M7.4 8.4 H16 V16 L7.4 14.8 Z" fill="#fff" />
        </svg>
      </div>
      <div className="flex w-[50px] justify-center pr-[2px]">
        <svg width="17" height="17" viewBox="0 0 17 17">
          <circle cx="10.8" cy="5.9" r="5" fill="none" stroke="#fff" strokeWidth="1.4" />
          <path d="M7.2 9.6 L0.7 16.2" stroke="#fff" strokeWidth="1.5" />
        </svg>
      </div>
      {apps.map((a) => (
        <div key={a.key} className="flex w-[49px] shrink-0 justify-center">
          <div className={`${a.cell ?? ""} flex h-10 w-12 flex-col items-center`}>
            <div className="flex h-[38px] items-center pt-[2px]">{a.icon}</div>
            {a.line && <div className={`${a.line} h-[2px]`} />}
          </div>
        </div>
      ))}
      <div className="ml-auto flex h-10 items-center text-white">
        <svg width="12" height="7" viewBox="0 0 12 7">
          <path d="M0.6 6.4 L6 1 L11.4 6.4" fill="none" stroke="#fff" strokeWidth="1.2" />
        </svg>
        <svg width="16" height="14" viewBox="0 0 16 14" className="ml-[10px]">
          <path d="M5.5 1.5 H15.5 V9.5 H4.5 M4.5 6.5 V13.5 M10 9.5 V12.5 M7 12.5 H13" fill="none" stroke="#fff" />
          <path d="M0.5 0.5 H4.5 V4.5 Q4.5 6 2.5 6.5 Q0.5 6 0.5 4.5 Z M2.5 2 V4" fill="none" stroke="#fff" />
        </svg>
        <svg width="17" height="14" viewBox="0 0 17 14" className="ml-[8px]">
          <path d="M0.5 4.5 H2.8 L5.5 1.7 V12.3 L2.8 9.5 H0.5 Z" fill="none" stroke="#fff" />
          <path d="M7.8 5 Q9 7 7.8 9" fill="none" stroke="#fff" />
          <path d="M10 3 Q12.4 7 10 11" fill="none" stroke="#bbb" />
          <path d="M12.6 1 Q16.4 7 12.6 13" fill="none" stroke="#777" />
        </svg>
        <span className="ml-[7px]"><Cloud /></span>
        <span className="ml-2"><Cloud /></span>
        <span className="ml-[12px] w-[20px] text-[11.8px] leading-4 tracking-[-0.6px]">ESP</span>
        <div className="mb-[2px] ml-[12px] w-[56px] whitespace-nowrap text-center text-[11.8px] leading-[18px] tracking-[-0.45px]">
          <div>13:39</div>
          <div>23/7/2020</div>
        </div>
        <svg width="16" height="16" viewBox="0 0 16 16" className="ml-[16px]">
          <path d="M0.5 0.5 H15.5 V12.5 H10.5 L8 15 L5.5 12.5 H0.5 Z" fill="none" stroke="#fff" strokeWidth="1.1" />
        </svg>
        <span className="ml-5 mr-1 h-10 w-px bg-[#5d5e60]" />
      </div>
    </div>
  );
}

export default function App() {
  return (
    <div className={`${UI} flex h-[768px] w-[1366px] flex-col overflow-hidden bg-white`}>
      <header className="h-[99px] shrink-0 bg-[#3b3b3b]">
        <TabStrip />
        <Toolbar />
        <Bookmarks />
      </header>
      <CartPage />
      <Taskbar />
    </div>
  );
}
